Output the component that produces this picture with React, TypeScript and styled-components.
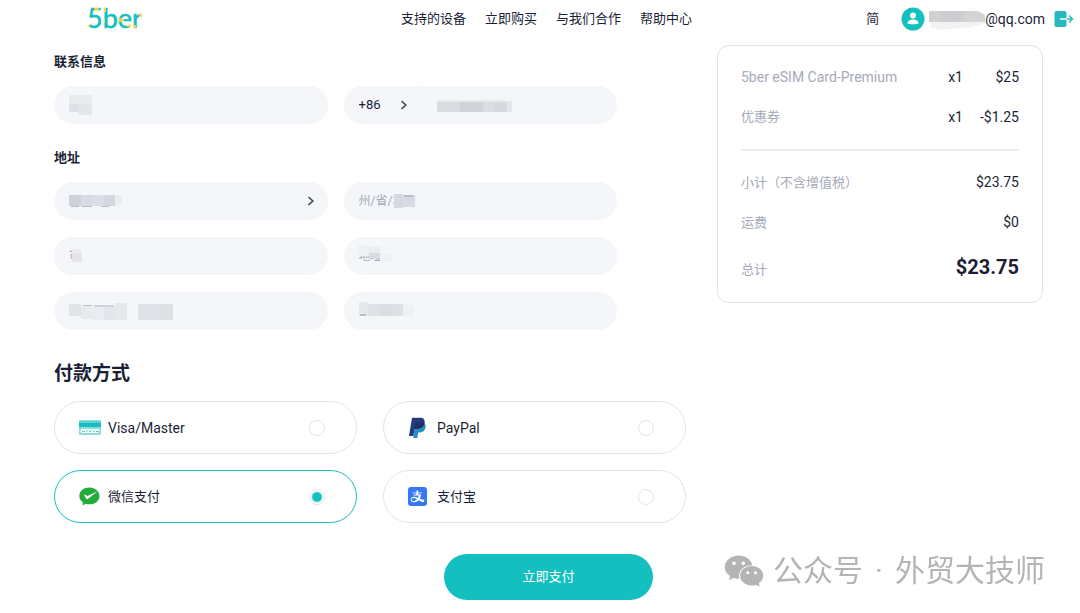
import React, { useState } from "react";
import styled, { createGlobalStyle } from "styled-components";
import { AiFillAlipaySquare, AiFillWechat } from "react-icons/ai";

const teal = "#13bfbf";
const ink = "#1b1f36";
const muted = "#a6a9b8";
const line = "#e4e4e6";
const fieldBg = "#f4f6fa";

const GlobalStyle = createGlobalStyle`
  *, *::before, *::after { box-sizing: border-box; }
  body {
    margin: 0;
    background: #fff;
    color: ${ink};
    font-family: Roboto, "Noto Sans CJK SC", sans-serif;
    font-size: 13px;
    line-height: 20px;
  }
  button, input, select { font: inherit; color: inherit; }
`;

const Header = styled.header`
  display: flex;
  align-items: center;
  height: 38px;
  padding: 0 6px 0 86px;
`;

const HomeLink = styled.a`
  display: flex;
  width: 60px;
  height: 36px;
`;

const Nav = styled.nav`
  display: flex;
  gap: 19px;
  margin-left: 255px;
`;

const NavLink = styled.a`
  color: ${ink};
  text-decoration: none;
  white-space: nowrap;
`;

const Account = styled.div`
  display: flex;
  align-items: center;
  margin-left: auto;
`;

const PlainButton = styled.button`
  display: flex;
  align-items: center;
  padding: 0;
  border: 0;
  background: none;
  cursor: pointer;
`;

const UserButton = styled(PlainButton)`
  margin: 0 9px 0 22px;
  font-size: 14px;
  svg:first-child { margin-right: 4px; }
`;

const Content = styled.main`
  display: grid;
  grid-template-columns: minmax(0, 1fr) 326px;
  column-gap: 31px;
  align-items: start;
  padding: 7px 37px 13px 54px;
`;

const Fields = styled.section`
  margin-right: 69px;
`;

const SectionTitle = styled.h2`
  margin: 0 0 14px;
  padding-top: 7px;
  font-size: 13px;
  line-height: 20px;
  font-weight: 700;
`;

const FieldGrid = styled.div`
  display: grid;
  grid-template-columns: 1fr 1fr;
  gap: 17px 16px;
  margin-bottom: 17px;
`;

const FieldBox = styled.div`
  position: relative;
  display: flex;
  align-items: center;
  height: 38px;
  border-radius: 19px;
  background: ${fieldBg};
  overflow: hidden;
`;

const TextInput = styled.input`
  flex: 1;
  min-width: 0;
  height: 38px;
  padding: 0 15px;
  border: 0;
  outline: 0;
  background: transparent;
  font-size: 12px;
  &::placeholder { color: ${muted}; opacity: 1; }
`;

const Picker = styled.select<{ $width?: string }>`
  appearance: none;
  width: ${(p) => p.$width ?? "100%"};
  height: 38px;
  padding: 0 15px;
  border: 0;
  border-right: ${(p) => (p.$width ? "1px solid #f0f2f6" : "0")};
  outline: 0;
  background: transparent;
`;

const Arrow = styled.svg<{ $inset: string }>`
  position: absolute;
  left: ${(p) => p.$inset};
  top: 14px;
  pointer-events: none;
`;

const Mosaic = styled.svg<{ $left: string }>`
  position: absolute;
  left: ${(p) => p.$left};
  top: 0;
  pointer-events: none;
`;

const PayTitle = styled.h1`
  margin: 0 0 13px;
  padding-top: 13px;
  font-size: 19px;
  line-height: 28px;
  font-weight: 700;
`;

const Methods = styled.div`
  display: grid;
  grid-template-columns: 1fr 1fr;
  gap: 16px 26px;
`;

const Method = styled.label<{ $active: boolean }>`
  display: flex;
  align-items: center;
  height: 53px;
  padding: 0 31px 0 24px;
  border: 1px solid ${(p) => (p.$active ? teal : line)};
  border-radius: 27px;
  cursor: pointer;
`;

const MethodIcon = styled.span`
  display: flex;
  width: 29px;
`;

const AlipayIcon = styled(AiFillAlipaySquare)`
  border-radius: 3px;
`;

const MethodName = styled.span`
  flex: 1;
  font-size: 14px;
  &:lang(zh) { font-size: 13px; }
`;

const Radio = styled.input`
  appearance: none;
  width: 16px;
  height: 16px;
  margin: 0;
  border: 1px solid ${line};
  border-radius: 50%;
  &:checked { background: radial-gradient(circle, ${teal} 4px, #fff 6px); }
`;

const Summary = styled.aside`
  padding: 11px 23px;
  border: 1px solid ${line};
  border-radius: 12px;
`;

const Items = styled.table`
  width: 100%;
  border-collapse: collapse;
  font-size: 14px;
`;

const ItemName = styled.th`
  height: 40px;
  padding: 0;
  color: ${muted};
  font-weight: 400;
  text-align: left;
  &:lang(zh) { font-size: 13px; }
`;

const ItemCell = styled.td<{ $width?: string }>`
  width: ${(p) => p.$width ?? "auto"};
  padding: 0;
  text-align: right;
`;

const Totals = styled.dl`
  margin: 12px 0 0;
  padding-top: 11px;
  border-top: 2px solid #ededee;
`;

const TotalRow = styled.div<{ $grand?: boolean }>`
  display: flex;
  align-items: baseline;
  justify-content: space-between;
  padding: ${(p) => (p.$grand ? "11px 0 10px" : "10px 0 9px")};
`;

const TotalLabel = styled.dt`
  color: ${muted};
`;

const TotalValue = styled.dd<{ $grand?: boolean }>`
  margin: 0;
  font-size: ${(p) => (p.$grand ? "20px" : "14px")};
  font-weight: ${(p) => (p.$grand ? 700 : 400)};
  line-height: ${(p) => (p.$grand ? "28px" : "20px")};
`;

const Actions = styled.div`
  grid-column: 1 / -1;
  display: flex;
  justify-content: center;
  padding-top: 31px;
`;

const PayButton = styled.button`
  width: 209px;
  height: 46px;
  border: 0;
  border-radius: 23px;
  background: ${teal};
  color: #fff;
  cursor: pointer;
`;

const Watermark = styled.div`
  position: fixed;
  right: 35px;
  bottom: 20px;
  display: flex;
  align-items: center;
  color: #b4b4b4;
  font-size: 30px;
  line-height: 44px;
  white-space: nowrap;
  pointer-events: none;
  svg { margin-right: 7px; }
`;

const Separator = styled.span`
  width: 32px;
  text-align: center;
`;

type Block = [number, number, number, number, string];

function Cover({ left, blocks }: { left: string; blocks: Block[] }) {
  return (
    <Mosaic $left={left} width="120" height="38" aria-hidden="true">
      {blocks.map(([x, y, w, h, c], i) => (
        <rect key={i} x={x} y={y} width={w} height={h} fill={c} />
      ))}
    </Mosaic>
  );
}

function Chevron({ inset }: { inset: string }) {
  return (
    <Arrow $inset={inset} width="8" height="10" viewBox="0 0 8 10" fill="none" aria-hidden="true">
      <path d="M1.5 1 5.8 5 1.5 9" stroke="#4a4d58" strokeWidth="1.7" />
    </Arrow>
  );
}

function Logo() {
  return (
    <svg width="60" height="36" viewBox="0 0 60 36" role="img" aria-label="5ber">
      <defs>
        <pattern id="logo-fill" width="60" height="36" patternUnits="userSpaceOnUse">
          <rect width="60" height="36" fill={teal} />
          <g fill="#f2cf3b">
            <rect x="8" y="5" width="5" height="5" />
            <rect x="0" y="22" width="4" height="4" />
            <rect x="15" y="5" width="5" height="6" />
            <rect x="15" y="18" width="4" height="4" />
            <rect x="33" y="17" width="5" height="4" />
            <rect x="41" y="21" width="4" height="5" />
            <rect x="45" y="24" width="5" height="4" />
            <rect x="53" y="11" width="4" height="5" />
          </g>
        </pattern>
      </defs>
      <text x="1" y="27" fontFamily="Lato, sans-serif" fontSize="27" fill="url(#logo-fill)" stroke="url(#logo-fill)" strokeWidth="0.5">5ber</text>
    </svg>
  );
}

function CardIcon() {
  return (
    <svg width="22" height="15" viewBox="0 0 22 15" aria-hidden="true">
      <rect width="22" height="15" rx="1" fill="#8edcdc" />
      <path d="M0 1h22v2H0z" fill="#62d0d0" />
      <path d="M0 3h22v4H0z" fill={teal} />
      <rect x="1.500" y="9" width="19" height="4" rx="2" fill="#fff" />
      <path d="M3 11.500h3M7 12l2-2M10 10.500l1 1.500 2-2M14 12l2-1.500M17 11.500h3" stroke="#58cccc" strokeWidth="1" fill="none" />
    </svg>
  );
}

function WechatPayIcon() {
  return (
    <svg width="21" height="19" viewBox="0 0 21 19" aria-hidden="true">
      <path d="M10.500.5C4.800.5.300 4 .300 8.900c0 2.800 1.500 5.100 3.800 6.600l-.7 2.900 3.400-1.700c1.200.4 2.400.5 3.700.5 5.700 0 10-3.600 10-8.300S16.200.5 10.500.5Z" fill="#22ac38" />
      <path d="M5.200 8.200c.6-.8 1.300-.4 3.100.8L18.800 4.300 8.700 12.100c-.5.400-1.100.3-1.400-.3Z" fill="#fff" />
    </svg>
  );
}

function PaypalIcon() {
  return (
    <svg width="20" height="22" viewBox="0 0 20 22" aria-hidden="true">
      <path d="M7.500 5.500h8c1.900 1 2.600 2.700 2 5.200-.8 3.400-3.100 4.800-6.600 4.800h-.7l-.9 5.500H5.200Z" fill="#2790c3" />
      <path d="M4 .7h8.200c3.400 0 5 2 4.300 5.400-.8 4-3.500 5.700-7.300 5.700H6.700L5.300 19H1Z" fill="#253b80" />
      <path d="M7.500 5.600h8.900c-.6 4.400-3.300 6.200-7.200 6.200H6.500Z" fill="#222d65" />
    </svg>
  );
}

function UserIcon() {
  return (
    <svg width="24" height="24" viewBox="0 0 24 24" aria-hidden="true">
      <circle cx="12" cy="12" r="11.500" fill={teal} />
      <circle cx="12" cy="8.500" r="3" fill="#fff" />
      <path d="M6.500 16.500c0-2.400 2.300-4 5.500-4s5.500 1.600 5.500 4c0 1-11 1-11 0Z" fill="#fff" />
    </svg>
  );
}

function LogoutIcon() {
  return (
    <svg width="20" height="18" viewBox="0 0 20 18" aria-hidden="true">
      <rect x="0.500" y="1" width="12" height="16" rx="2" fill="#26b9bd" />
      <path d="M6 9h7" stroke="#fff" strokeWidth="1.500" />
      <path d="M13 9h5.500M15 5.500 18.500 9 15 12.500" stroke="#26b9bd" strokeWidth="1.500" fill="none" />
    </svg>
  );
}

const methods = [
  { id: "card", name: "Visa/Master", lang: "en", icon: <CardIcon /> },
  { id: "paypal", name: "PayPal", lang: "en", icon: <PaypalIcon /> },
  { id: "wechat", name: "微信支付", lang: "zh", icon: <WechatPayIcon /> },
  { id: "alipay", name: "支付宝", lang: "zh", icon: <AlipayIcon size={19} viewBox="112 112 800 800" color="#3478f6" /> },
];

const nav = ["支持的设备", "立即购买", "与我们合作", "帮助中心"];

export default function App() {
  const [method, setMethod] = useState("wechat");
  return (
    <>
      <GlobalStyle />
      <Header>
        <HomeLink href="#"><Logo /></HomeLink>
        <Nav>
          {nav.map((item) => <NavLink key={item} href="#">{item}</NavLink>)}
        </Nav>
        <Account>
          <PlainButton type="button">简</PlainButton>
          <UserButton type="button">
            <UserIcon />
            <svg width="56" height="22" viewBox="0 0 56 22" aria-hidden="true">
              <path d="M0 3h50l6 4v8l-14 4-30 3-10-3Z" fill="#f2f2f3" />
              <path d="M0 3h12v11H0z" fill="#d0d1d3" />
              <path d="M12 3h11v11H12z" fill="#cbccd0" />
              <path d="M23 3h12v11H23z" fill="#cdced1" />
              <path d="M35 3h13l8 4v7H35z" fill="#d3d4d6" />
            </svg>
            @qq.com
          </UserButton>
          <PlainButton type="button" aria-label="退出"><LogoutIcon /></PlainButton>
        </Account>
      </Header>
      <Content>
        <div>
          <Fields>
            <SectionTitle>联系信息</SectionTitle>
            <FieldGrid>
              <FieldBox>
                <TextInput aria-label="姓名" />
                <Cover left="15px" blocks={[[0, 9, 23, 9, "#e9eaef"], [0, 18, 12, 8, "#dfe1e9"], [9, 18, 14, 11, "#e4e6ea"]]} />
              </FieldBox>
              <FieldBox>
                <Picker $width="78px" aria-label="区号"><option>+86</option></Picker>
                <Chevron inset="56px" />
                <TextInput type="tel" aria-label="电话" />
                <Cover left="93px" blocks={[[0, 14, 69, 2, "#e8eaee"], [0, 16, 23, 10, "#d9dbe0"], [23, 16, 12, 10, "#d1d3d9"], [35, 16, 11, 10, "#cfd3db"], [46, 16, 12, 10, "#dcdde2"], [58, 16, 12, 10, "#d7d9de"], [70, 15, 5, 11, "#e4e6eb"]]} />
              </FieldBox>
            </FieldGrid>
            <SectionTitle>地址</SectionTitle>
            <FieldGrid>
              <FieldBox>
                <Picker aria-label="国家/地区"><option value="" /></Picker>
                <Chevron inset="calc(100% - 21px)" />
                <Cover left="15px" blocks={[[0, 13, 12, 11, "#cfd0da"], [12, 13, 11, 11, "#d9dae3"], [23, 13, 12, 11, "#dcdde6"], [35, 13, 11, 11, "#d5d6df"], [46, 13, 7, 10, "#eaecf1"], [2, 24, 8, 1, "#b9bdc8"], [13, 24, 10, 1, "#b9bdc8"], [32, 24, 8, 1, "#b9bdc8"]]} />
              </FieldBox>
              <FieldBox>
                <TextInput aria-label="州/省/地区" placeholder="州/省/地区" />
                <Cover left="50px" blocks={[[0, 12, 9, 14, "#d8d9e0"], [9, 12, 15, 14, fieldBg], [9, 13, 12, 12, "#d9dae4"], [10, 13, 9, 2, "#b8bbc9"]]} />
              </FieldBox>
              <FieldBox>
                <TextInput aria-label="市" placeholder="市" />
                <Cover left="18px" blocks={[[0, 12, 9, 5, "#ebecf1"], [0, 17, 10, 8, "#e3e5e9"], [-1, 25, 11, 2, fieldBg]]} />
              </FieldBox>
              <FieldBox>
                <TextInput aria-label="地址" placeholder="地址" />
                <Cover left="14px" blocks={[[0, 8, 12, 11, "#eff0f4"], [11, 10, 11, 7, "#ebecf1"], [11, 16, 11, 5, "#d9dbe2"], [22, 16, 12, 8, "#f0f1f5"]]} />
              </FieldBox>
              <FieldBox>
                <TextInput aria-label="详细地址" />
                <Cover left="15px" blocks={[[0, 12, 12, 12, "#e3e4e9"], [12, 14, 11, 13, "#e8eaee"], [23, 15, 12, 13, "#ebecf1"], [35, 15, 11, 13, "#e4e6eb"], [46, 11, 12, 17, "#e6e8ec"], [14, 13, 9, 1, "#b9bdc8"], [25, 13, 20, 2, "#cfd2da"], [69, 12, 23, 16, "#e0e1e7"], [92, 12, 12, 16, "#dfe0e6"]]} />
              </FieldBox>
              <FieldBox>
                <TextInput aria-label="邮编" />
                <Cover left="15px" blocks={[[0, 10, 9, 14, "#e5e7eb"], [9, 12, 12, 12, "#e0e1e6"], [21, 12, 12, 12, "#dcdde3"], [33, 12, 11, 12, "#dfe0e6"], [44, 13, 11, 11, "#eff0f4"], [1, 22, 6, 2, "#b9bdc8"]]} />
              </FieldBox>
            </FieldGrid>
          </Fields>
          <PayTitle id="pay-title">付款方式</PayTitle>
          <Methods role="radiogroup" aria-labelledby="pay-title">
            {methods.map((m) => (
              <Method key={m.id} $active={m.id === method}>
                <MethodIcon>{m.icon}</MethodIcon>
                <MethodName lang={m.lang}>{m.name}</MethodName>
                <Radio type="radio" name="method" checked={m.id === method} onChange={() => setMethod(m.id)} />
              </Method>
            ))}
          </Methods>
        </div>
        <Summary>
          <Items>
            <tbody>
              <tr>
                <ItemName scope="row" lang="en">5ber eSIM Card-Premium</ItemName>
                <ItemCell>x1</ItemCell>
                <ItemCell $width="56px">$25</ItemCell>
              </tr>
              <tr>
                <ItemName scope="row" lang="zh">优惠券</ItemName>
                <ItemCell>x1</ItemCell>
                <ItemCell $width="56px">-$1.25</ItemCell>
              </tr>
            </tbody>
          </Items>
          <Totals>
            <TotalRow>
              <TotalLabel>小计（不含增值税）</TotalLabel>
              <TotalValue>$23.75</TotalValue>
            </TotalRow>
            <TotalRow>
              <TotalLabel>运费</TotalLabel>
              <TotalValue>$0</TotalValue>
            </TotalRow>
            <TotalRow $grand>
              <TotalLabel>总计</TotalLabel>
              <TotalValue $grand>$23.75</TotalValue>
            </TotalRow>
          </Totals>
        </Summary>
        <Actions>
          <PayButton type="submit">立即支付</PayButton>
        </Actions>
      </Content>
      <Watermark>
        <AiFillWechat size={44} />
        <span>公众号</span>
        <Separator>·</Separator>
        <span>外贸大技师</span>
      </Watermark>
    </>
  );
}
